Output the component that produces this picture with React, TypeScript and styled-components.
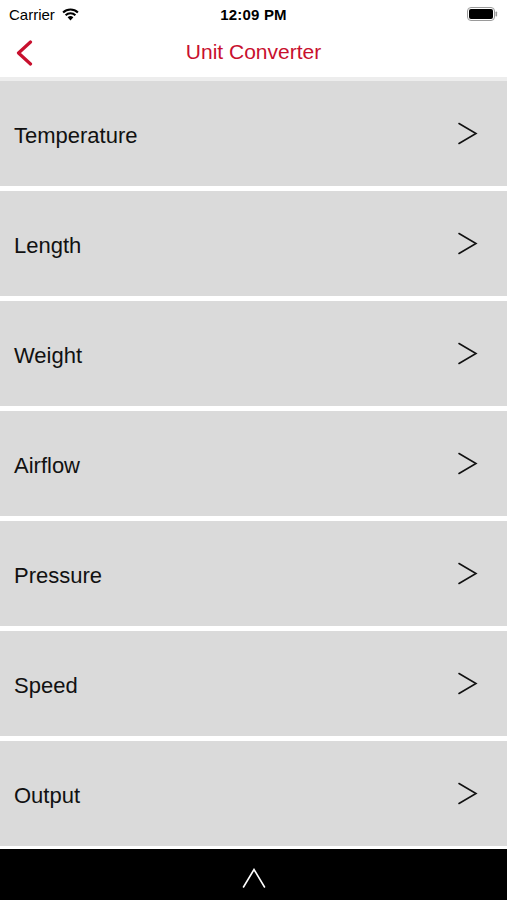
import React from 'react';
import styled, { createGlobalStyle } from 'styled-components';

const GlobalStyle = createGlobalStyle`
  html, body {
    margin: 0;
    padding: 0;
    background: #ffffff;
  }
  body {
    font-family: "Liberation Sans", Arial, sans-serif;
  }
`

const Screen = styled.div`
  width: 507px;
  height: 900px;
  display: flex;
  flex-direction: column;
  background: #ffffff;
  overflow: hidden;
`

const StatusBar = styled.div`
  height: 28px;
  display: grid;
  grid-template-columns: 1fr auto 1fr;
  align-items: center;
  padding: 0 9px;
  font-size: 15px;
  color: #000;
`

const Carrier = styled.div`
  display: flex;
  align-items: center;
  gap: 7px;
`

const Clock = styled.div`
  font-weight: bold;
  font-size: 15px;
  letter-spacing: 0.2px;
`

const Battery = styled.div`
  justify-self: end;
  display: flex;
  align-items: center;
`

const NavBar = styled.div`
  height: 49px;
  display: grid;
  grid-template-columns: 60px 1fr 60px;
  align-items: center;
`

const BackButton = styled.button`
  border: 0;
  background: none;
  padding: 0 0 0 15px;
  display: flex;
  align-items: center;
  height: 100%;
`

const Title = styled.div`
  text-align: center;
  color: #c8102e;
  font-size: 21px;
  padding-bottom: 2px;
`

const Divider = styled.div`
  height: 4px;
  background: #ededed;
`

const List = styled.div`
  display: flex;
  flex-direction: column;
  gap: 5px;
`

const Row = styled.div`
  height: 105px;
  background: #dadada;
  display: flex;
  align-items: center;
  justify-content: space-between;
  padding: 0 29px 0 14px;
  font-size: 22px;
  color: #111;
`

const Label = styled.span`
  padding-top: 4px;
`

const Footer = styled.div`
  margin-top: 3px;
  flex: 1;
  background: #000;
  display: flex;
  align-items: center;
  justify-content: center;
  padding-top: 6px;
`

const items = ['Temperature', 'Length', 'Weight', 'Airflow', 'Pressure', 'Speed', 'Output'];

const App = () => {
  return (
    <Screen>
      <GlobalStyle />
      <StatusBar>
        <Carrier>
          Carrier
          <svg width="17" height="13" viewBox="0 0 17 13">
            <path d="M8.5 12.5 L5.6 9.3 A4.2 4.2 0 0 1 11.4 9.3 Z" fill="#000" />
            <path d="M3.6 7.2 A7 7 0 0 1 13.4 7.2" stroke="#000" strokeWidth="2.1" fill="none" />
            <path d="M1.1 4.5 A10.6 10.6 0 0 1 15.9 4.5" stroke="#000" strokeWidth="2.1" fill="none" />
          </svg>
        </Carrier>
        <Clock>12:09 PM</Clock>
        <Battery>
          <svg width="31" height="14" viewBox="0 0 31 14">
            <rect x="0.5" y="0.5" width="27" height="13" rx="3.5" fill="none" stroke="#9a9a9a" />
            <rect x="2" y="2" width="24" height="10" rx="2" fill="#000" />
            <rect x="28.5" y="4.5" width="1.6" height="5" rx="0.8" fill="#9a9a9a" />
          </svg>
        </Battery>
      </StatusBar>
      <NavBar>
        <BackButton>
          <svg width="18" height="26" viewBox="0 0 18 26">
            <path d="M15.5 2 L3.5 13 L15.5 24" stroke="#c8102e" strokeWidth="3.2" fill="none" strokeLinecap="round" strokeLinejoin="round" />
          </svg>
        </BackButton>
        <Title>Unit Converter</Title>
        <div />
      </NavBar>
      <Divider />
      <List>
        {items.map((name) => (
          <Row key={name}>
            <Label>{name}</Label>
            <svg width="21" height="23" viewBox="0 0 21 23">
              <path d="M2 1.5 L19 11.5 L2 21.5" stroke="#111" strokeWidth="1.6" fill="none" strokeLinecap="round" />
            </svg>
          </Row>
        ))}
      </List>
      <Footer>
        <svg width="24" height="20" viewBox="0 0 24 20">
          <path d="M1.5 19 L12 1.5 L22.5 19" stroke="#fff" strokeWidth="1.6" fill="none" strokeLinecap="round" />
        </svg>
      </Footer>
    </Screen>
  )
}

export default App;
